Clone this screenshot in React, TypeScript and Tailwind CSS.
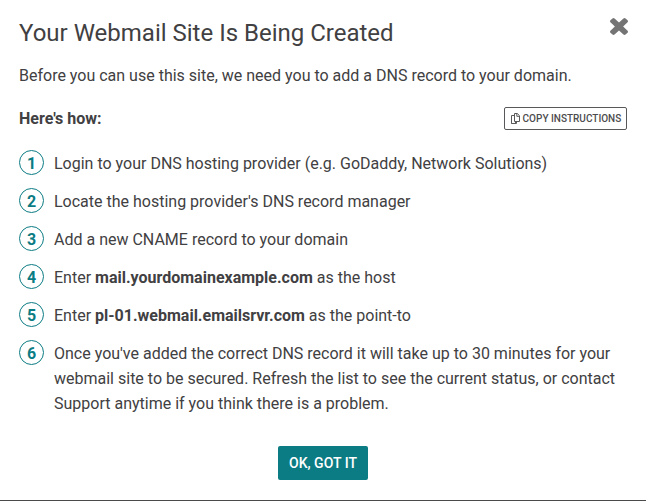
import React from "react";

const steps: React.ReactNode[] = [
  "Login to your DNS hosting provider (e.g. GoDaddy, Network Solutions)",
  "Locate the hosting provider's DNS record manager",
  "Add a new CNAME record to your domain",
  <>Enter <b className="font-bold">mail.yourdomainexample.com</b> as the host</>,
  <>Enter <b className="font-bold">pl-01.webmail.emailsrvr.com</b> as the point-to</>,
  <>Once you've added the correct DNS record it will take up to 30 minutes for your<br />webmail site to be secured. Refresh the list to see the current status, or contact<br />Support anytime if you think there is a problem.</>,
];

export default function App() {
  return (
    <div className="flex h-[501px] w-[646px] flex-col border-b border-[#4a4a4a] bg-white px-[19px] font-[Roboto,sans-serif] text-[16px] leading-[25px] text-[#414042]">
      <header className="flex h-[63px] items-start justify-between pt-[17px]">
        <h1 className="text-[24px] leading-[32px]">Your Webmail Site Is Being Created</h1>
        <button aria-label="Close" className="-mr-px pt-px">
          <svg width="18" height="17" viewBox="302 366 1188 1188" preserveAspectRatio="none" fill="#747474"><path d="M1490 1322q0 40-28 68l-136 136q-28 28-68 28t-68-28l-294-294-294 294q-28 28-68 28t-68-28l-136-136q-28-28-28-68t28-68l294-294-294-294q-28-28-28-68t28-68l136-136q28-28 68-28t68 28l294 294 294-294q28-28 68-28t68 28l136 136q28 28 28 68t-28 68l-294 294 294 294q28 28 28 68z" /></svg>
        </button>
      </header>
      <p>Before you can use this site, we need you to add a DNS record to your domain.</p>
      <div className="mt-[18px] flex h-[25px] items-center justify-between">
        <b className="font-bold">Here's how:</b>
        <button className="flex h-[23px] w-[123px] items-center gap-[2px] whitespace-nowrap rounded-[2px] border border-[#58585a] pl-[6px] text-[10px] font-medium text-[#4c4c4e]">
          <svg className="-mt-px mr-[0.6px] shrink-0" width="9" height="11" viewBox="0 0 9 11" fill="none" stroke="#5a5a5c"><path d="M.5 2.5h4v8h-4z" fill="#fff" /><path d="M3.5 .5h2.8l2.2 2.2v5.8h-5z" fill="#fff" /><path d="M5.8.7v2.6h2.5" /><path d="M.5 10.5h5v-2" /></svg>
          COPY INSTRUCTIONS
        </button>
      </div>
      <ol className="mt-[20px] flex flex-col gap-[13px]">
        {steps.map((s, i) => (
          <li key={i} className="flex">
            <span className="-mt-px mr-[10px] flex size-[25px] shrink-0 items-center justify-center rounded-full border border-[#0c7c84] pt-[2px] font-bold text-[#0c7c84]">{i + 1}</span>
            <span className="whitespace-nowrap">{s}</span>
          </li>
        ))}
      </ol>
      <button className="mt-[30px] h-[34px] w-[90px] self-center rounded-[2px] bg-[#0c7c84] text-[14px] font-medium text-white">OK, GOT IT</button>
    </div>
  );
}
